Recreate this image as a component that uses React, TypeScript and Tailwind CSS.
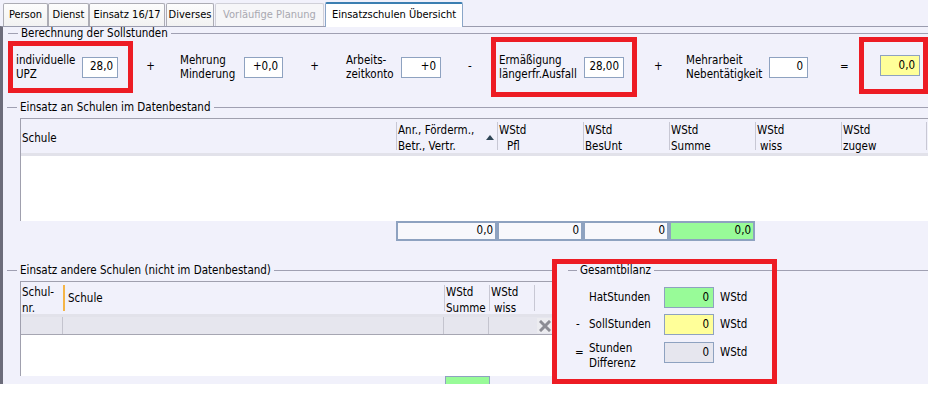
import React from "react";

const tabs = [
  { label: "Person", w: "w-[45px]", ml: "ml-[3px]" },
  { label: "Dienst", w: "w-[41px]", ml: "" },
  { label: "Einsatz 16/17", w: "w-[76px]", ml: "" },
  { label: "Diverses", w: "w-[48px]", ml: "ml-[1px]" },
];

function GroupTitle({ text, lead }: { text: string; lead: string }) {
  return (
    <div className="flex items-center h-full">
      <div className={`h-px bg-[#a0a0b2] ${lead}`} />
      <span className="px-[3px] whitespace-nowrap leading-[12px]">{text}</span>
      <div className="h-px bg-[#a0a0b2] flex-1" />
    </div>
  );
}

function Field({ value, w, bg = "bg-white" }: { value: string; w: string; bg?: string }) {
  return (
    <div
      className={`${w} h-[21px] shrink-0 ${bg} border border-[#8ea2c0] flex items-center justify-end pr-[4px]`}
    >
      {value}
    </div>
  );
}

function Label({ w, children }: { w: string; children: React.ReactNode }) {
  return <div className={`${w} shrink-0 leading-[14px] whitespace-nowrap`}>{children}</div>;
}

function HeadCell({ w, first, children }: { w: string; first?: boolean; children: React.ReactNode }) {
  return (
    <div className={`${w} shrink-0 h-full py-[3px]`}>
      <div
        className={`h-full flex flex-col justify-center leading-[16px] pl-[1px] pt-[4px] whitespace-nowrap ${
          first ? "" : "border-l border-[#c8c8d4]"
        }`}
      >
        {children}
      </div>
    </div>
  );
}

function Total({ value, w, green }: { value: string; w: string; green?: boolean }) {
  return (
    <div
      className={`${w} h-[20px] border-2 border-[#8ea2c0] flex items-center justify-end pr-[2px] ${
        green ? "bg-[#98fb98]" : "bg-[#f8f8fc]"
      }`}
    >
      {value}
    </div>
  );
}

export default function App() {
  return (
    <div className="w-[928px] h-[393px] bg-white overflow-hidden text-[11.5px] text-black font-['DejaVu_Sans_Condensed','DejaVu_Sans',sans-serif]">
      <div className="h-[384px] bg-[#f1f1fb] flex flex-col">
        {/* tab strip */}
        <div className="h-[26px] flex items-end shrink-0 text-[11px]">
          {tabs.map((t) => (
            <div
              key={t.label}
              className={`${t.ml} ${t.w} h-[23px] border border-b-0 border-[#acacb4] rounded-t-[2px] bg-gradient-to-b from-[#fdfdfd] to-[#f2f2f2] flex items-center justify-center whitespace-nowrap`}
            >
              {t.label}
            </div>
          ))}
          <div className="ml-[1px] w-[109px] h-[23px] border border-b-0 border-[#d0d0d8] rounded-t-[2px] bg-[#f6f6f8] flex items-center justify-center text-[#a8a8b0] whitespace-nowrap">
            Vorläufige Planung
          </div>
          <div className="ml-[1px] w-[138px] h-[25px] -mb-px relative z-10 border border-b-0 border-[#8aa6c8] border-t-2 border-t-[#3c7fb1] rounded-t-[2px] bg-white flex items-center justify-center whitespace-nowrap">
            Einsatzschulen Übersicht
          </div>
        </div>

        {/* panel */}
        <div className="h-[358px] shrink-0 flex flex-col border-t border-[#9a9cae] border-l-[3px] border-l-[#6c6c7a]">
          <div className="h-[12px] -mb-[2px] shrink-0 relative z-10">
            <GroupTitle text="Berechnung der Sollstunden" lead="ml-[5px] w-[10px]" />
          </div>

          {/* Sollstunden row */}
          <div className="h-[60px] flex items-center shrink-0">
            <div className="ml-[5px] w-[125px] h-[52px] shrink-0 border-[5px] border-[#ed1c24] flex items-center pl-[3px]">
              <Label w="w-[66px]">
                individuelle
                <br />
                UPZ
              </Label>
              <Field value="28,0" w="w-[36px]" />
            </div>
            <span className="w-[35px] shrink-0 text-center">+</span>
            <div className="ml-[12px]">
              <Label w="w-[64px]">
                Mehrung
                <br />
                Minderung
              </Label>
            </div>
            <Field value="+0,0" w="w-[39px]" />
            <span className="w-[63px] shrink-0 text-center">+</span>
            <Label w="w-[55px]">
              Arbeits-
              <br />
              zeitkonto
            </Label>
            <Field value="+0" w="w-[40px]" />
            <span className="w-[50px] shrink-0 pl-[27px]">-</span>
            <div className="w-[146px] h-[60px] shrink-0 border-[5px] border-[#ed1c24] flex items-center pl-[3px]">
              <Label w="w-[85px]">
                Ermäßigung
                <br />
                längerfr.Ausfall
              </Label>
              <Field value="28,00" w="w-[40px]" />
            </div>
            <span className="w-[49px] shrink-0 pl-[17px]">+</span>
            <Label w="w-[83px]">
              Mehrarbeit
              <br />
              Nebentätigkeit
            </Label>
            <Field value="0" w="w-[39px]" />
            <span className="w-[51px] shrink-0 pl-[32px]">=</span>
            <div className="self-start w-[69px] h-[57px] shrink-0 border-[5px] border-[#ed1c24] flex items-center pl-[16px]">
              <Field value="0,0" w="w-[40px]" bg="bg-[#ffff99]" />
            </div>
          </div>

          {/* Einsatz an Schulen */}
          <div className="mt-[4px] h-[12px] shrink-0">
            <GroupTitle text="Einsatz an Schulen im Datenbestand" lead="ml-[4px] w-[10px]" />
          </div>
          <div className="mt-[5px] ml-[17px] shrink-0 border-t border-l border-[#a0a0ae]">
            <div className="h-[37px] flex border-b-[3px] border-[#e2e2ea]">
              <HeadCell w="w-[375px]" first>
                <span>Schule</span>
              </HeadCell>
              <HeadCell w="w-[101px]">
                <div className="flex items-center">
                  <div>
                    Anr., Förderm.,
                    <br />
                    Betr., Vertr.
                  </div>
                  <svg width="8" height="5" viewBox="0 0 8 5" className="ml-auto mr-[3px] mt-[-2px]">
                    <polygon points="0,5 4,0 8,5" fill="#2f4656" />
                  </svg>
                </div>
              </HeadCell>
              <HeadCell w="w-[86px]">
                <span>WStd</span>
                <span className="pl-[8px]">Pfl</span>
              </HeadCell>
              <HeadCell w="w-[86px]">
                <span>WStd</span>
                <span>BesUnt</span>
              </HeadCell>
              <HeadCell w="w-[86px]">
                <span>WStd</span>
                <span>Summe</span>
              </HeadCell>
              <HeadCell w="w-[86px]">
                <span>WStd</span>
                <span className="pl-[3px]">wiss</span>
              </HeadCell>
              <HeadCell w="w-[85px]">
                <span>WStd</span>
                <span>zugew</span>
              </HeadCell>
              <div className="flex-1 py-[3px]">
                <div className="h-full border-l border-[#c8c8d4]" />
              </div>
            </div>
            <div className="h-[65px] bg-white" />
          </div>
          <div className="flex h-[20px] shrink-0">
            <div className="w-[393px] shrink-0" />
            <Total value="0,0" w="w-[101px]" />
            <Total value="0" w="w-[86px]" />
            <Total value="0" w="w-[86px]" />
            <Total value="0,0" w="w-[86px]" green />
          </div>

          {/* Einsatz andere Schulen + Gesamtbilanz */}
          <div className="mt-[18px] h-[125px] shrink-0 flex">
            <div className="w-[549px] shrink-0 pt-[5px] flex flex-col">
              <div className="h-[12px] shrink-0">
                <GroupTitle text="Einsatz andere Schulen (nicht im Datenbestand)" lead="ml-[4px] w-[10px]" />
              </div>
              <div className="mt-[5px] ml-[17px] flex-1 flex flex-col">
                <div className="border-t border-l border-[#a0a0ae] shrink-0">
                  <div className="h-[35px] flex border-b-[3px] border-[#e2e2ea]">
                    <div className="w-[42px] shrink-0 h-full pt-[4px] leading-[16px] pl-[1px] flex flex-col justify-center">
                      <span>Schul-</span>
                      <span>nr.</span>
                    </div>
                    <div className="w-[381px] shrink-0 h-full py-[3px]">
                      <div className="h-full border-l-2 border-[#f5b547] pl-[3px] pt-[2px] flex items-center">Schule</div>
                    </div>
                    <HeadCell w="w-[45px]">
                      <span>WStd</span>
                      <span>Summe</span>
                    </HeadCell>
                    <HeadCell w="w-[45px]">
                      <span>WStd</span>
                      <span className="pl-[3px]">wiss</span>
                    </HeadCell>
                    <div className="flex-1 py-[3px]">
                      <div className="h-full border-l border-[#c8c8d4]" />
                    </div>
                  </div>
                  <div className="h-[18px] flex bg-[#e6e6ee] border-b border-[#a6a6b2]">
                    <div className="w-[42px] shrink-0 border-r border-[#c4c4ce]" />
                    <div className="w-[381px] shrink-0 border-r border-[#c4c4ce]" />
                    <div className="w-[45px] shrink-0 border-r border-[#c4c4ce]" />
                    <div className="w-[45px] shrink-0" />
                    <div className="flex-1 flex items-center pl-[3px]">
                      <div className="w-[16px] h-[15px] bg-[#ececf0] flex items-center justify-center">
                        <svg width="12" height="12" viewBox="0 0 12 12">
                          <path d="M2 2 L10 10 M10 2 L2 10" stroke="#8c8c94" strokeWidth="3" strokeLinecap="square" />
                        </svg>
                      </div>
                    </div>
                  </div>
                  <div className="h-[41px] bg-white" />
                </div>
                <div className="flex-1 flex">
                  <div className="ml-[425px] w-[45px] bg-[#98fb98] border border-b-0 border-[#8ea2c0]" />
                </div>
              </div>
            </div>

            <div className="w-[225px] shrink-0 border-[5px] border-[#ed1c24] flex flex-col">
              <div className="h-[12px] shrink-0">
                <GroupTitle text="Gesamtbilanz" lead="ml-[11px] w-[9px]" />
              </div>
              <div className="mt-[11px] flex items-center pl-[18px]">
                <span className="w-[14px] shrink-0" />
                <span className="w-[75px] shrink-0">HatStunden</span>
                <Field value="0" w="w-[50px]" bg="bg-[#98fb98]" />
                <span className="ml-[6px]">WStd</span>
              </div>
              <div className="mt-[6px] flex items-center pl-[18px]">
                <span className="w-[14px] shrink-0 pl-[1px]">-</span>
                <span className="w-[75px] shrink-0">SollStunden</span>
                <Field value="0" w="w-[50px]" bg="bg-[#ffff99]" />
                <span className="ml-[6px]">WStd</span>
              </div>
              <div className="mt-[7px] flex items-start pl-[18px]">
                <span className="w-[14px] shrink-0 leading-[21px]">=</span>
                <span className="w-[75px] shrink-0 leading-[15px] mt-[-1px]">
                  Stunden
                  <br />
                  Differenz
                </span>
                <Field value="0" w="w-[50px]" bg="bg-[#e6e6ee]" />
                <span className="ml-[6px] leading-[21px]">WStd</span>
              </div>
            </div>

            <div className="flex-1 pt-[11px]">
              <div className="h-px bg-[#a0a0b2]" />
            </div>
          </div>
        </div>
      </div>
    </div>
  );
}
